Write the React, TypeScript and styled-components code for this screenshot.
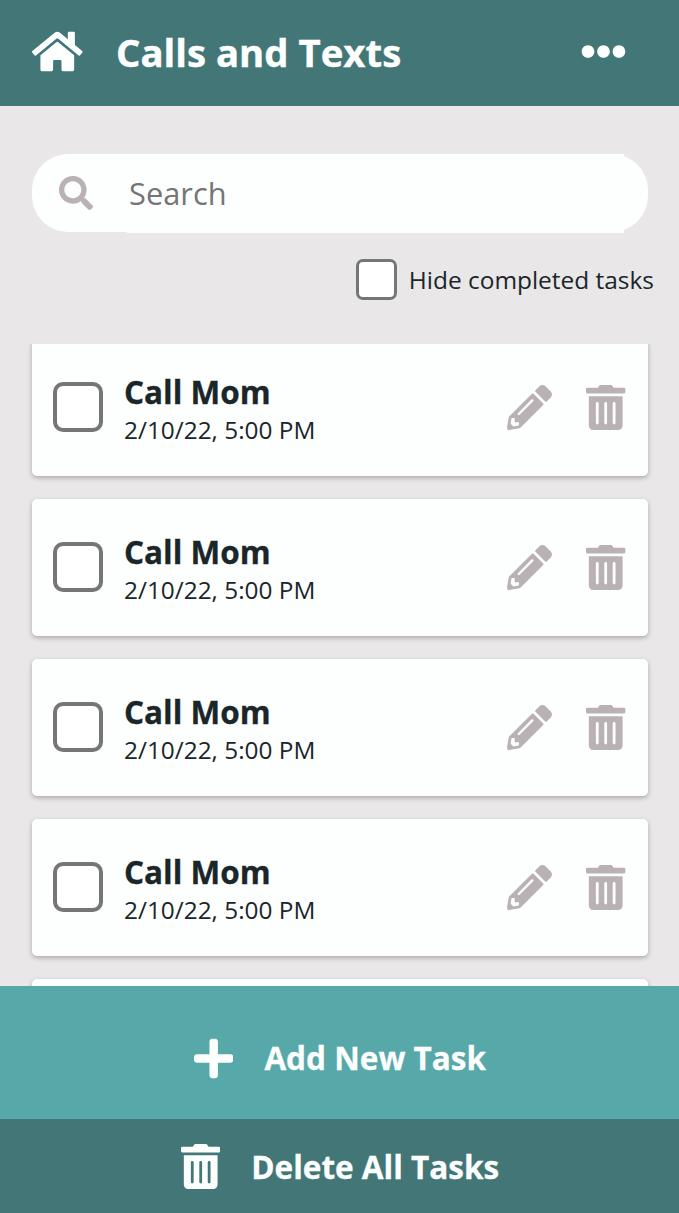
import React from 'react';
import styled, { createGlobalStyle } from 'styled-components';
import { FaHome, FaEllipsisH, FaSearch, FaPencilAlt, FaTrashAlt, FaPlus } from 'react-icons/fa';

const GlobalStyle = createGlobalStyle`
  *, *::before, *::after { box-sizing: border-box; }
  body {
    margin: 0;
    overflow: hidden;
    background: #e9e7e8;
    color: #1a2629;
    font-family: "Open Sans", "Noto Sans", sans-serif;
  }
  button, input { font: inherit; }
  svg { display: block; flex: none; }
`;

const Page = styled.div`
  display: flex;
  flex-direction: column;
  width: 100%;
  height: 100vh;
`;

const Header = styled.header`
  display: flex;
  align-items: center;
  flex: none;
  height: 106px;
  padding: 0 53.5px 4px 32px;
  background: #437777;
  color: #fdffff;
`;

const Title = styled.h1`
  flex: 1;
  margin: 2px 0 0 33.4px;
  font-size: 38.35px;
  line-height: 52px;
  font-weight: 700;
  white-space: nowrap;
  -webkit-text-stroke: 0.4px currentColor;
`;

const IconButton = styled.button`
  display: flex;
  padding: 0;
  border: 0;
  background: none;
  color: inherit;
`;

const SearchBar = styled.label`
  display: flex;
  align-items: center;
  flex: none;
  height: 78px;
  margin: 48.4px 31px 0.6px 32px;
  padding: 0 24px 0 26.5px;
  border-radius: 36px;
  background: #fdffff;
  color: #b9b1b3;
`;

const SearchInput = styled.input`
  flex: 1;
  min-width: 0;
  height: 79px;
  margin-left: 34.5px;
  padding: 0 0 1px 2px;
  border: 0;
  outline: 0;
  background: #fdffff;
  color: #1a2629;
  font-size: 30.8px;
  &::placeholder { color: #757575; opacity: 1; }
`;

const FilterRow = styled.label`
  display: flex;
  align-items: center;
  justify-content: flex-end;
  flex: none;
  gap: 11.5px;
  height: 41px;
  margin: 26px 25px 44px 0;
  font-size: 24.45px;
  white-space: nowrap;
`;

const Checkbox = styled.input<{ $size: number; $line: number; $radius: number }>`
  appearance: none;
  flex: none;
  width: ${(p) => p.$size}px;
  height: ${(p) => p.$size}px;
  margin: 0;
  border: ${(p) => p.$line}px solid #767676;
  border-radius: ${(p) => p.$radius}px;
  background: #fff;
`;

const TaskList = styled.ul`
  flex: 1;
  min-height: 0;
  margin: 0;
  padding: 0 31px 0 32px;
  overflow: hidden;
  list-style: none;
`;

const TaskCard = styled.li`
  display: flex;
  align-items: center;
  height: 137.5px;
  margin-bottom: 22.5px;
  padding: 0 22.5px 1px 20.5px;
  border-radius: 5px;
  background: #fdffff;
  box-shadow: 0 2px 5px rgba(0, 0, 0, 0.27);
  &:first-child { margin-top: -5px; }
`;

const TaskText = styled.div`
  flex: 1;
  margin: 5px 0 0 21.5px;
  white-space: nowrap;
`;

const TaskName = styled.div`
  font-size: 31.5px;
  line-height: 40px;
  font-weight: 700;
  -webkit-text-stroke: 0.3px currentColor;
`;

const TaskTime = styled.div`
  font-size: 24.4px;
  line-height: 35px;
`;

const TaskActions = styled.div`
  display: flex;
  gap: 34px;
  color: #b9b1b3;
`;

const BarButton = styled.button<{ $height: number; $shade: string; $top: number }>`
  display: flex;
  align-items: center;
  justify-content: center;
  flex: none;
  gap: 31px;
  height: ${(p) => p.$height}px;
  padding: ${(p) => p.$top}px 0 0 1px;
  border: 0;
  background: ${(p) => p.$shade};
  color: #fdffff;
  font-size: 31.5px;
  line-height: 44px;
  font-weight: 700;
  white-space: nowrap;
  -webkit-text-stroke: 0.3px currentColor;
`;

const tasks = Array.from({ length: 5 }, (_, id) => ({ id, name: 'Call Mom', time: '2/10/22, 5:00 PM' }));

export default function App() {
  return (
    <Page>
      <GlobalStyle />
      <Header>
        <IconButton aria-label="Home"><FaHome style={{ width: 50.6, height: 45 }} /></IconButton>
        <Title>Calls and Texts</Title>
        <IconButton aria-label="More"><FaEllipsisH size={45} /></IconButton>
      </Header>
      <SearchBar>
        <FaSearch size={34} />
        <SearchInput placeholder="Search" />
      </SearchBar>
      <FilterRow>
        <Checkbox type="checkbox" $size={41} $line={3} $radius={7} />
        Hide completed tasks
      </FilterRow>
      <TaskList>
        {tasks.map((task) => (
          <TaskCard key={task.id}>
            <Checkbox type="checkbox" $size={50} $line={4} $radius={10} />
            <TaskText>
              <TaskName>{task.name}</TaskName>
              <TaskTime>{task.time}</TaskTime>
            </TaskText>
            <TaskActions>
              <IconButton aria-label="Edit"><FaPencilAlt size={45} /></IconButton>
              <IconButton aria-label="Delete"><FaTrashAlt style={{ width: 39.4, height: 45 }} /></IconButton>
            </TaskActions>
          </TaskCard>
        ))}
      </TaskList>
      <BarButton $height={133} $shade="#57a8a9" $top={11}>
        <FaPlus style={{ width: 39.4, height: 45 }} />
        Add New Task
      </BarButton>
      <BarButton $height={94} $shade="#437777" $top={1}>
        <FaTrashAlt style={{ width: 39.4, height: 45 }} />
        Delete All Tasks
      </BarButton>
    </Page>
  );
}
